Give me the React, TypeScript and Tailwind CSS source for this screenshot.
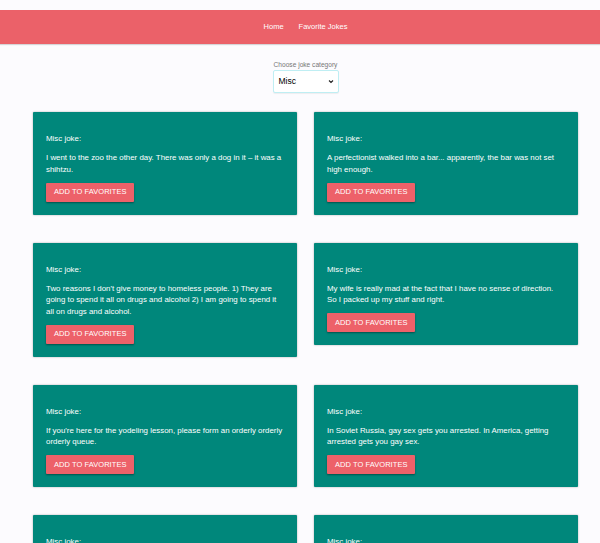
const jokes = [
  "I went to the zoo the other day. There was only a dog in it – it was a shihtzu.",
  "A perfectionist walked into a bar... apparently, the bar was not set high enough.",
  "Two reasons I don't give money to homeless people. 1) They are going to spend it all on drugs and alcohol 2) I am going to spend it all on drugs and alcohol.",
  "My wife is really mad at the fact that I have no sense of direction. So I packed up my stuff and right.",
  "If you're here for the yodeling lesson, please form an orderly orderly orderly queue.",
  "In Soviet Russia, gay sex gets you arrested. In America, getting arrested gets you gay sex.",
  "I'm reading a book about anti-gravity. It's impossible to put down.",
  "What's the best thing about Switzerland? I don't know, but the flag is a big plus.",
];

function JokeCard({ text }: { text: string }) {
  return (
    <div className="bg-[#00877b] text-white text-[7.9px] leading-[11.5px] px-[13px] pt-[21px] pb-[13px] shadow-[0_0_2px_rgba(0,0,0,0.35)] rounded-[1px]">
      <p className="mb-[7.5px]">Misc joke:</p>
      <p className="mb-[7.5px]">{text}</p>
      <button className="flex items-center h-[19px] px-[8px] bg-[#ed6169] text-white text-[7.5px] font-medium uppercase tracking-[0.05px] rounded-[1px] shadow-[0_1px_2px_rgba(0,0,0,0.4)]">
        Add to favorites
      </button>
    </div>
  );
}

export default function App() {
  return (
    <div
      className="min-h-[543px] bg-[#fcfbfe] pt-[10px]"
      style={{ fontFamily: '"Liberation Sans", Arial, sans-serif' }}
    >
      <nav className="h-[34px] bg-[#eb6169] shadow-[0_1px_1px_rgba(0,0,0,0.15)] flex items-center justify-center gap-[15px] pl-[11px] text-white text-[7.5px]">
        <a>Home</a>
        <a>Favorite Jokes</a>
      </nav>

      <div className="flex flex-col items-center pl-[11px] mt-[17px]">
        <label className="text-[6.6px] leading-[8px] text-[#777]">Choose joke category</label>
        <div className="mt-[1px] w-[66px] h-[23px] bg-white border border-[#bfeef3] rounded-[2px] flex items-center justify-between px-[5px] shadow-[0_1px_1px_rgba(0,0,0,0.06)]">
          <span className="text-[8.5px] text-black">Misc</span>
          <svg width="6" height="5" viewBox="0 0 6 5" className="mr-[-1px]">
            <path d="M1 1.5 L3 3.5 L5 1.5" fill="none" stroke="#222" strokeWidth="1.1" />
          </svg>
        </div>
      </div>

      <div className="grid grid-cols-2 gap-x-[17px] gap-y-[28px] items-start pl-[33px] pr-[22px] mt-[19px]">
        {jokes.map((j, i) => (
          <JokeCard key={i} text={j} />
        ))}
      </div>
    </div>
  );
}
